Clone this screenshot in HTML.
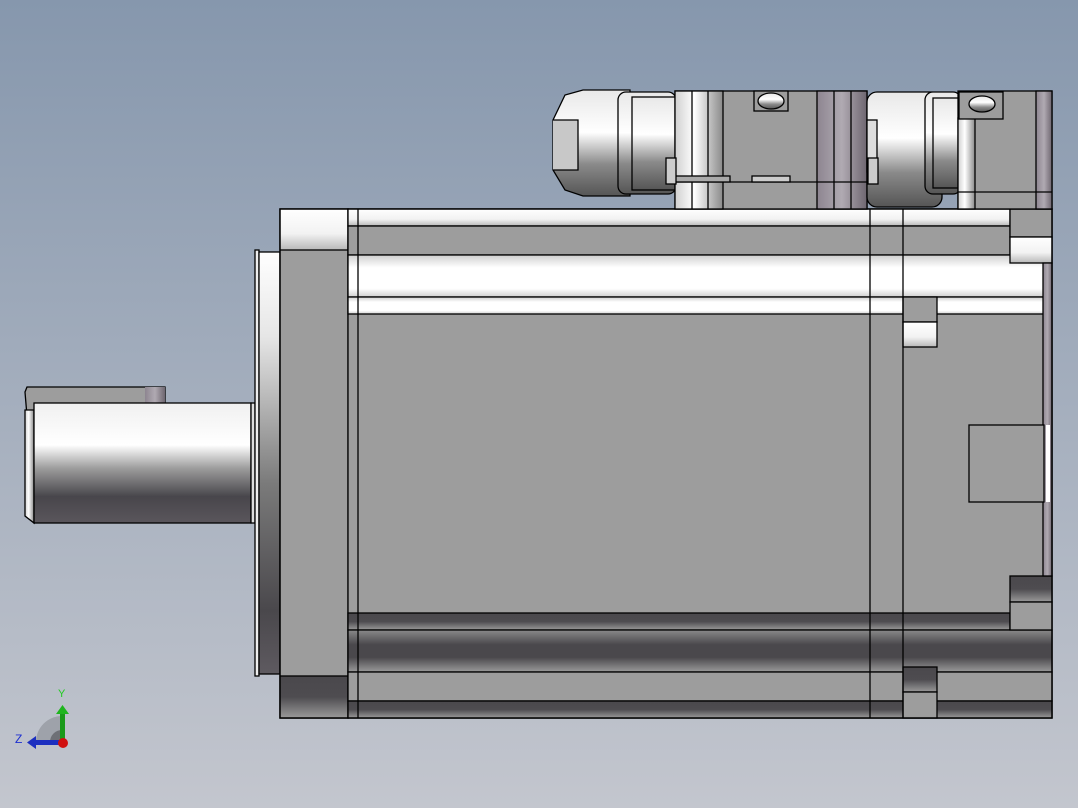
<!DOCTYPE html>
<html><head><style>
html,body{margin:0;padding:0;width:1078px;height:808px;overflow:hidden}
</style></head><body>
<svg width="1078" height="808" viewBox="0 0 1078 808" xmlns="http://www.w3.org/2000/svg">
<defs>
<linearGradient id="bg" x1="0" y1="0" x2="0" y2="1"><stop offset="0" stop-color="#8697ad"/><stop offset="1" stop-color="#c3c6ce"/></linearGradient>
<linearGradient id="cyl" x1="0" y1="0" x2="0" y2="1"><stop offset="0" stop-color="#f0f0f0"/><stop offset="0.35" stop-color="#ffffff"/><stop offset="0.55" stop-color="#9a9a9a"/><stop offset="0.78" stop-color="#48464b"/><stop offset="1" stop-color="#5a565c"/></linearGradient>
<linearGradient id="disk" x1="0" y1="0" x2="0" y2="1"><stop offset="0" stop-color="#ffffff"/><stop offset="0.2" stop-color="#e6e6e6"/><stop offset="0.55" stop-color="#7a7a7a"/><stop offset="0.85" stop-color="#4a484c"/><stop offset="1" stop-color="#5e5a60"/></linearGradient>
<linearGradient id="wb" x1="0" y1="0" x2="0" y2="1"><stop offset="0" stop-color="#ffffff"/><stop offset="0.6" stop-color="#f2f2f2"/><stop offset="1" stop-color="#b8b8b8"/></linearGradient>
<linearGradient id="wb2" x1="0" y1="0" x2="0" y2="1"><stop offset="0" stop-color="#cfcfcf"/><stop offset="0.3" stop-color="#ffffff"/><stop offset="0.8" stop-color="#ffffff"/><stop offset="1" stop-color="#cfcfcf"/></linearGradient>
<linearGradient id="db" x1="0" y1="0" x2="0" y2="1"><stop offset="0" stop-color="#8a8a8a"/><stop offset="0.35" stop-color="#4a484c"/><stop offset="0.65" stop-color="#4a484c"/><stop offset="1" stop-color="#9a9a9a"/></linearGradient>
<linearGradient id="db1" x1="0" y1="0" x2="0" y2="1"><stop offset="0" stop-color="#4a484c"/><stop offset="0.5" stop-color="#4e4c50"/><stop offset="1" stop-color="#9a9a9a"/></linearGradient>
<linearGradient id="vc" x1="0" y1="0" x2="1" y2="0"><stop offset="0" stop-color="#d0d0d0"/><stop offset="0.4" stop-color="#ffffff"/><stop offset="1" stop-color="#8a8a8a"/></linearGradient>
<linearGradient id="vp" x1="0" y1="0" x2="1" y2="0"><stop offset="0" stop-color="#8d8590"/><stop offset="0.5" stop-color="#b0aab2"/><stop offset="1" stop-color="#6e6670"/></linearGradient>
<linearGradient id="nut" x1="0" y1="0" x2="0" y2="1"><stop offset="0" stop-color="#e8e8e8"/><stop offset="0.4" stop-color="#ffffff"/><stop offset="0.7" stop-color="#8a8a8a"/><stop offset="1" stop-color="#555"/></linearGradient>
</defs>
<rect width="1078" height="808" fill="url(#bg)"/>
<g stroke="#000" stroke-width="1.3">
<!-- shaft -->
<path d="M25 392 L27 387 L165 387 L165 404 L150 410 L34 410 L27 416 Z" fill="#9d9d9d"/>
<rect x="145" y="387" width="20" height="22" fill="url(#vp)" stroke="none"/>
<path d="M25 410 L34 410 L34 523 L25 516 Z" fill="url(#vc)"/>
<rect x="34" y="403" width="217" height="120" fill="url(#cyl)"/>
<rect x="251" y="403" width="4" height="120" fill="#ddd"/>
<!-- pilot disk -->
<rect x="255" y="250" width="4" height="426" fill="#eee"/>
<rect x="259" y="252" width="21" height="422" fill="url(#disk)"/>
<!-- flange -->
<rect x="280" y="209" width="68" height="509" fill="#9d9d9d"/>
<rect x="280" y="209" width="68" height="41" fill="url(#wb)"/>
<rect x="280" y="676" width="68" height="42" fill="url(#db1)"/>
<!-- body -->
<rect x="348" y="209" width="704" height="509" fill="#9d9d9d"/>
<rect x="348" y="209" width="662" height="17" fill="url(#wb)"/>
<rect x="348" y="226" width="662" height="29" fill="#9d9d9d"/>
<rect x="348" y="255" width="700" height="42" fill="url(#wb2)"/>
<rect x="348" y="297" width="700" height="17" fill="url(#wb2)"/>
<rect x="1010" y="209" width="42" height="28" fill="#9d9d9d"/>
<rect x="1010" y="237" width="42" height="26" fill="url(#wb)"/>
<rect x="903" y="297" width="34" height="25" fill="#9d9d9d"/>
<rect x="903" y="322" width="34" height="25" fill="url(#wb)"/>
<rect x="348" y="613" width="662" height="17" fill="url(#db1)"/>
<rect x="348" y="630" width="704" height="42" fill="url(#db)"/>
<rect x="348" y="672" width="704" height="29" fill="#9d9d9d"/>
<rect x="348" y="701" width="704" height="17" fill="url(#db1)"/>
<rect x="1010" y="576" width="42" height="26" fill="url(#db1)"/>
<rect x="1010" y="602" width="42" height="28" fill="#9d9d9d"/>
<rect x="903" y="667" width="34" height="25" fill="url(#db1)"/>
<rect x="903" y="692" width="34" height="26" fill="#9d9d9d"/>
<rect x="1043" y="263" width="9" height="313" fill="url(#vp)"/>
<rect x="969" y="425" width="75" height="77" fill="#9d9d9d"/>
<rect x="1046" y="425" width="4" height="77" fill="#fff" stroke="none"/>
<line x1="358" y1="209" x2="358" y2="718"/>
<line x1="870" y1="209" x2="870" y2="718"/>
<line x1="903" y1="209" x2="903" y2="718"/>
<rect x="280" y="209" width="772" height="509" fill="none"/>
<!-- connector 1 -->
<path d="M553 120 L565 95 L583 90 L630 90 L630 196 L583 196 L565 190 L553 170 Z" fill="url(#nut)"/>
<path d="M553 120 L578 120 L578 170 L553 170" fill="#c8c8c8"/>
<rect x="618" y="92" width="58" height="102" rx="8" fill="url(#nut)"/>
<rect x="632" y="97" width="44" height="93" fill="url(#nut)"/>
<rect x="675" y="91" width="192" height="118" fill="#9d9d9d"/>
<rect x="675" y="91" width="48" height="118" fill="url(#vc)"/>
<rect x="817" y="91" width="50" height="118" fill="url(#vp)"/>
<line x1="692" y1="91" x2="692" y2="209"/><line x1="708" y1="91" x2="708" y2="209"/>
<line x1="834" y1="91" x2="834" y2="209"/><line x1="851" y1="91" x2="851" y2="209"/>
<line x1="675" y1="182" x2="867" y2="182"/>
<rect x="674" y="176" width="56" height="6" fill="#aaa"/>
<rect x="752" y="176" width="38" height="6" fill="#ccc"/>
<rect x="754" y="91" width="34" height="20" fill="#9d9d9d"/>
<ellipse cx="771" cy="101" rx="13" ry="8" fill="url(#nut)"/>
<rect x="666" y="158" width="10" height="26" fill="#ccc"/>
<!-- connector 2 -->
<rect x="867" y="92" width="75" height="115" rx="10" fill="url(#nut)"/>
<rect x="867" y="120" width="10" height="52" fill="#ddd"/>
<rect x="925" y="92" width="36" height="102" rx="8" fill="url(#nut)"/>
<rect x="933" y="98" width="28" height="90" fill="url(#nut)"/>
<rect x="958" y="91" width="94" height="118" fill="#9d9d9d"/>
<rect x="958" y="118" width="17" height="91" fill="url(#vc)"/>
<rect x="1036" y="91" width="16" height="118" fill="url(#vp)"/>
<line x1="958" y1="192" x2="1052" y2="192"/>
<rect x="959" y="92" width="44" height="27" fill="#9d9d9d"/>
<ellipse cx="982" cy="104" rx="13" ry="8" fill="url(#nut)"/>
<rect x="868" y="158" width="10" height="26" fill="#ccc"/>
</g>
<!-- triad -->
<path d="M36 742 A26 26 0 0 1 62 716 L62 742 Z" fill="#9ea2aa"/>
<path d="M50 742 A12 12 0 0 1 62 730 L62 742 Z" fill="#6e7076"/>
<rect x="60" y="712" width="5" height="31" fill="#1a9a1a"/>
<path d="M56 714 L62.5 705 L69 714 Z" fill="#1fb51f"/>
<rect x="34" y="740" width="28" height="5" fill="#1c2fc0"/>
<path d="M36 736 L27 742.5 L36 749 Z" fill="#1c2fc0"/>
<circle cx="63" cy="743" r="5" fill="#d01010"/>
<text x="58" y="697" font-family="Liberation Sans, sans-serif" font-size="11" fill="#1fcc1f">Y</text>
<text x="15" y="743" font-family="Liberation Sans, sans-serif" font-size="12" fill="#1c2fd0">Z</text>
</svg>
</body></html>
